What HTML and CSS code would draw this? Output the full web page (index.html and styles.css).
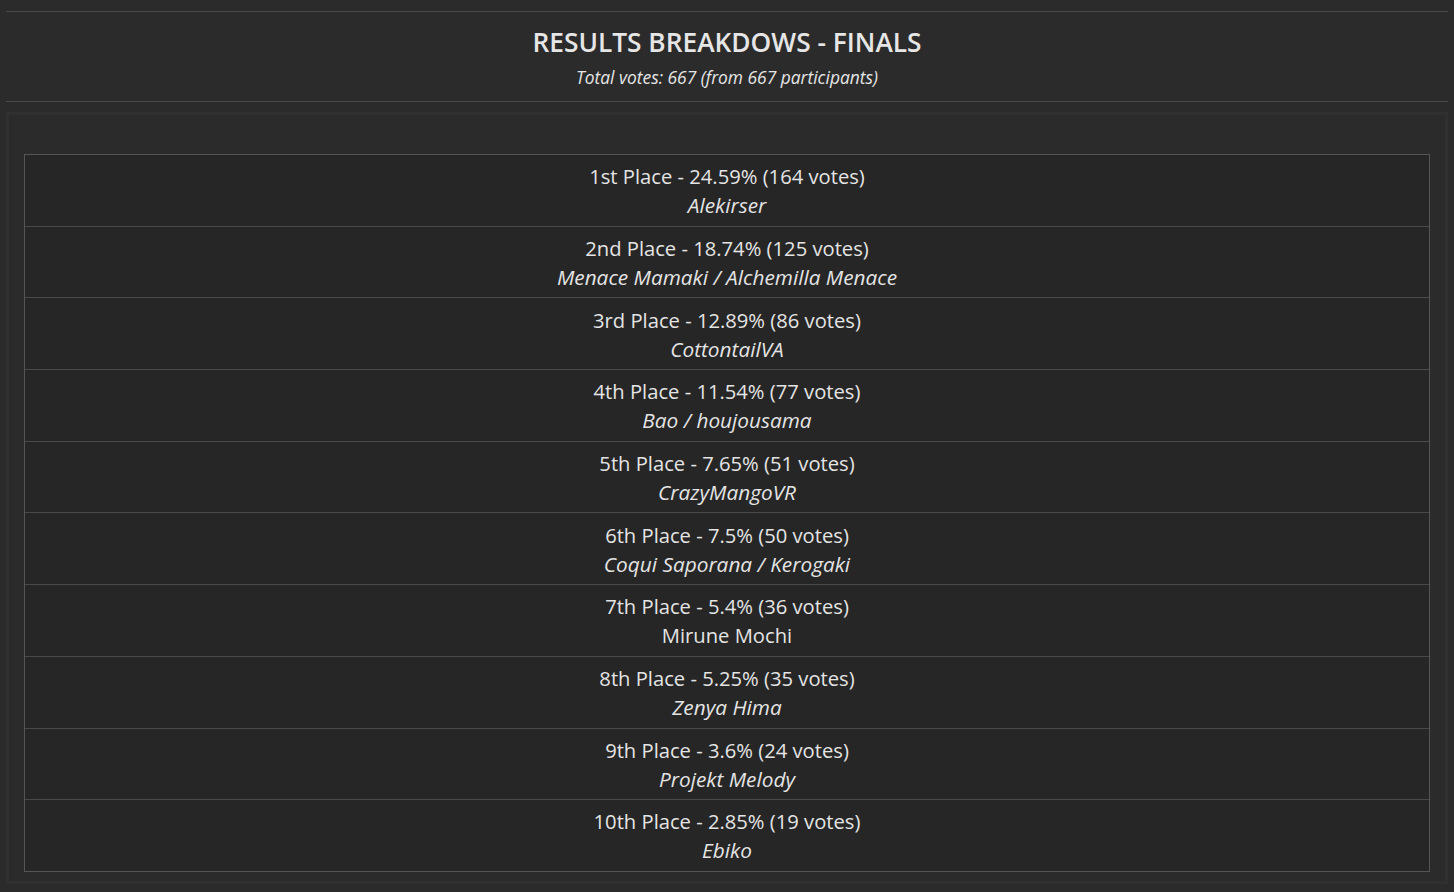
FILE: index.html
```html
<!DOCTYPE html>
<html>
<head>
<meta charset="utf-8">
<title>Results Breakdows - Finals</title>
<link rel="stylesheet" href="styles.css">
</head>
<body>
<div class="page">
  <header class="header">
    <h1 class="title">RESULTS BREAKDOWS - FINALS</h1>
    <p class="subtitle">Total votes: 667 (from 667 participants)</p>
  </header>
  <section class="panel">
    <div class="results">
      <div class="row"><div class="place">1st Place - 24.59% (164 votes)</div><div class="name">Alekirser</div></div>
      <div class="row"><div class="place">2nd Place - 18.74% (125 votes)</div><div class="name">Menace Mamaki / Alchemilla Menace</div></div>
      <div class="row"><div class="place">3rd Place - 12.89% (86 votes)</div><div class="name">CottontailVA</div></div>
      <div class="row"><div class="place">4th Place - 11.54% (77 votes)</div><div class="name">Bao / houjousama</div></div>
      <div class="row"><div class="place">5th Place - 7.65% (51 votes)</div><div class="name">CrazyMangoVR</div></div>
      <div class="row"><div class="place">6th Place - 7.5% (50 votes)</div><div class="name">Coqui Saporana / Kerogaki</div></div>
      <div class="row"><div class="place">7th Place - 5.4% (36 votes)</div><div class="name upright">Mirune Mochi</div></div>
      <div class="row"><div class="place">8th Place - 5.25% (35 votes)</div><div class="name">Zenya Hima</div></div>
      <div class="row"><div class="place">9th Place - 3.6% (24 votes)</div><div class="name">Projekt Melody</div></div>
      <div class="row"><div class="place">10th Place - 2.85% (19 votes)</div><div class="name">Ebiko</div></div>
    </div>
  </section>
</div>
</body>
</html>
```
FILE: styles.css
```css
html, body {
  margin: 0;
  padding: 0;
  background: #2b2b2b;
}
body {
  font-family: "Open Sans", "Noto Sans", sans-serif;
  color: #e4e4e4;
}
.page {
  padding: 11px 6px 0 6px;
}
.header {
  border-top: 1px solid #4a4a4a;
  border-bottom: 1px solid #4a4a4a;
  height: 89px;
  box-sizing: content-box;
  text-align: center;
}
.title {
  margin: 0;
  padding-top: 15px;
  font-size: 26.3px;
  line-height: 30px;
  font-weight: 600;
  color: #e6e6e6;
}
.subtitle {
  margin: 8px 0 0 0;
  font-size: 17.4px;
  line-height: 24px;
  font-style: italic;
  color: #e6e6e6;
}
.panel {
  margin-top: 10px;
  border: 3px solid #303030;
  padding: 39px 15px 9px 15px;
}
.results {
  background: #262626;
  border: 1px solid #555555;
}
.row {
  text-align: center;
  padding: 7.2px 0 5.5px 0;
  border-top: 1px solid #4a4a4a;
  font-size: 20.2px;
  line-height: 29px;
}
.row:first-child {
  border-top: none;
}
.name {
  font-style: italic;
  font-size: 20.8px;
}
.name.upright {
  font-style: normal;
  font-size: 20.2px;
}
```
